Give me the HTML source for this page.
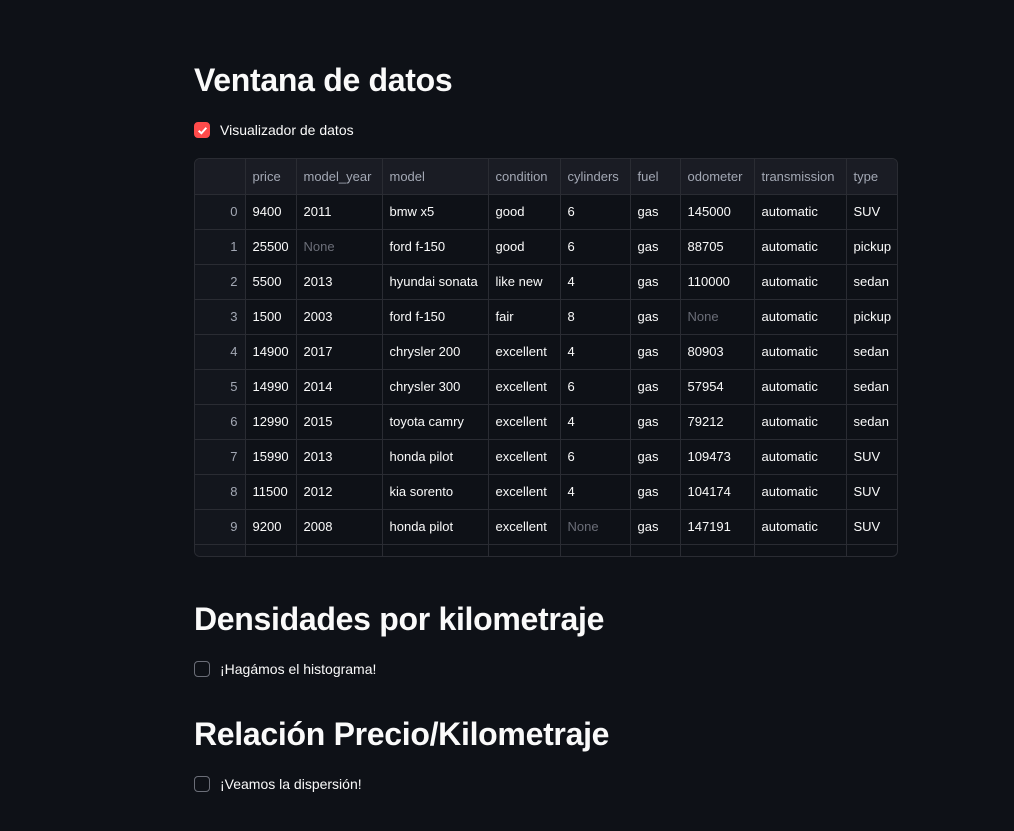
<!DOCTYPE html>
<html><head><meta charset="utf-8"><style>
body{margin:0;background:#0e1117;width:1014px;height:831px;overflow:hidden;font-family:"Liberation Sans",sans-serif;color:#fafafa;position:relative}
h1{position:absolute;left:194px;margin:0;font-size:32px;font-weight:bold;letter-spacing:-0.3px;line-height:40px}
.cb{position:absolute;left:194px;font-size:14px;line-height:18px;display:flex;align-items:center}
.box{width:16px;height:16px;border:1px solid #6b6e78;border-radius:4px;margin-right:10px;box-sizing:border-box}
.box.on{background:#ff4b4b;border-color:#ff4b4b;display:flex;align-items:center;justify-content:center}
.tbl{position:absolute;left:194px;top:158px;width:704px;height:399px;border:1px solid #2a2c33;border-radius:6px;overflow:hidden;box-sizing:border-box}
table{border-collapse:collapse;font-size:13px;table-layout:fixed;width:703px}
td,th{height:35px;border-right:1px solid #2a2c33;border-bottom:1px solid #2a2c33;padding:0 7px;white-space:nowrap;overflow:hidden;text-align:left;font-weight:normal;box-sizing:border-box}
th{background:#1a1c24;color:#a3a8b4}
td.i{text-align:right;color:#a3a8b4;background:#13161d}
th.i{background:#1a1c24}
.n{color:#6b6e78}
</style></head><body>
<h1 style="top:60px">Ventana de datos</h1>
<div class="cb" style="top:121px"><div class="box on"><svg width="11" height="11" viewBox="0 0 10 10"><path d="M1.5 5.2 L4 7.5 L8.5 2.5" stroke="#fff" stroke-width="1.8" fill="none"/></svg></div>Visualizador de datos</div>
<div class="tbl"><table>
<colgroup><col style="width:50px"><col style="width:51px"><col style="width:86px"><col style="width:106px"><col style="width:72px"><col style="width:70px"><col style="width:50px"><col style="width:74px"><col style="width:92px"><col style="width:52px"></colgroup>
<tr><th class="i"></th><th>price</th><th>model_year</th><th>model</th><th>condition</th><th>cylinders</th><th>fuel</th><th>odometer</th><th>transmission</th><th>type</th></tr>
<tr><td class="i">0</td><td>9400</td><td>2011</td><td>bmw x5</td><td>good</td><td>6</td><td>gas</td><td>145000</td><td>automatic</td><td>SUV</td></tr>
<tr><td class="i">1</td><td>25500</td><td class="n">None</td><td>ford f-150</td><td>good</td><td>6</td><td>gas</td><td>88705</td><td>automatic</td><td>pickup</td></tr>
<tr><td class="i">2</td><td>5500</td><td>2013</td><td>hyundai sonata</td><td>like new</td><td>4</td><td>gas</td><td>110000</td><td>automatic</td><td>sedan</td></tr>
<tr><td class="i">3</td><td>1500</td><td>2003</td><td>ford f-150</td><td>fair</td><td>8</td><td>gas</td><td class="n">None</td><td>automatic</td><td>pickup</td></tr>
<tr><td class="i">4</td><td>14900</td><td>2017</td><td>chrysler 200</td><td>excellent</td><td>4</td><td>gas</td><td>80903</td><td>automatic</td><td>sedan</td></tr>
<tr><td class="i">5</td><td>14990</td><td>2014</td><td>chrysler 300</td><td>excellent</td><td>6</td><td>gas</td><td>57954</td><td>automatic</td><td>sedan</td></tr>
<tr><td class="i">6</td><td>12990</td><td>2015</td><td>toyota camry</td><td>excellent</td><td>4</td><td>gas</td><td>79212</td><td>automatic</td><td>sedan</td></tr>
<tr><td class="i">7</td><td>15990</td><td>2013</td><td>honda pilot</td><td>excellent</td><td>6</td><td>gas</td><td>109473</td><td>automatic</td><td>SUV</td></tr>
<tr><td class="i">8</td><td>11500</td><td>2012</td><td>kia sorento</td><td>excellent</td><td>4</td><td>gas</td><td>104174</td><td>automatic</td><td>SUV</td></tr>
<tr><td class="i">9</td><td>9200</td><td>2008</td><td>honda pilot</td><td>excellent</td><td class="n">None</td><td>gas</td><td>147191</td><td>automatic</td><td>SUV</td></tr>
<tr><td class="i"></td><td></td><td></td><td></td><td></td><td></td><td></td><td></td><td></td><td></td></tr>
</table></div>
<h1 style="top:599px">Densidades por kilometraje</h1>
<div class="cb" style="top:660px"><div class="box"></div>¡Hagámos el histograma!</div>
<h1 style="top:714px">Relación Precio/Kilometraje</h1>
<div class="cb" style="top:775px"><div class="box"></div>¡Veamos la dispersión!</div>
</body></html>
